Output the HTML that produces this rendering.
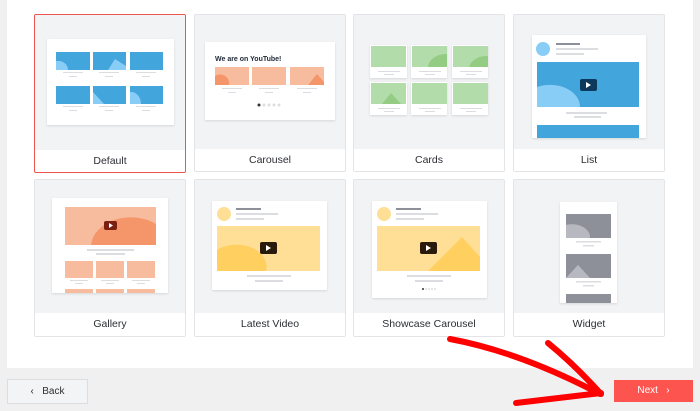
<!DOCTYPE html>
<html><head><meta charset="utf-8"><style>
*{margin:0;padding:0;box-sizing:border-box}
body{width:700px;height:411px;overflow:hidden;background:#f0f0f1;font-family:"Liberation Sans",sans-serif;position:relative}
.panel{position:absolute;left:7px;top:0;width:686px;height:368px;background:#fff}
.card{position:absolute;width:152px;border:1px solid #e3e4e7;border-radius:2px;background:#fff;overflow:hidden}
.card .pv{background:#f2f3f5;height:134px}
.card .lb{text-align:center;font-size:10.5px;color:#2b2e33;line-height:23px}
.r2 .pv{height:133px}
.btn{position:absolute;font-size:10px;text-align:center}
</style></head><body>
<div class="panel"></div>
<div class="card" style="left:34px;top:14px;height:159px;border-color:#f0544f"><div class="pv" style="height:135px"></div><div class="lb">Default</div></div>
<div class="card" style="left:194px;top:14px;height:158px"><div class="pv"></div><div class="lb">Carousel</div></div>
<div class="card" style="left:353px;top:14px;height:158px"><div class="pv"></div><div class="lb">Cards</div></div>
<div class="card" style="left:513px;top:14px;height:158px"><div class="pv"></div><div class="lb">List</div></div>
<div class="card r2" style="left:34px;top:179px;height:158px"><div class="pv"></div><div class="lb">Gallery</div></div>
<div class="card r2" style="left:194px;top:179px;height:158px"><div class="pv"></div><div class="lb">Latest Video</div></div>
<div class="card r2" style="left:353px;top:179px;height:158px"><div class="pv"></div><div class="lb">Showcase Carousel</div></div>
<div class="card r2" style="left:513px;top:179px;height:158px"><div class="pv"></div><div class="lb">Widget</div></div>
<div class="btn" style="left:7px;top:379px;width:81px;height:25px;border:1px solid #dcdde0;background:#f3f4f6;color:#2b2e33;line-height:23px">‹&nbsp;&nbsp;&nbsp;Back</div>
<div class="btn" style="left:614px;top:380px;width:79px;height:22px;background:#fe544f;color:#fff;line-height:22px">Next&nbsp;&nbsp;&nbsp;›</div>
<svg width="700" height="411" style="position:absolute;left:0;top:0" xmlns="http://www.w3.org/2000/svg">
<defs><filter id="s" x="-10%" y="-10%" width="120%" height="130%"><feDropShadow dx="0" dy="1" stdDeviation="1" flood-opacity="0.12"/></filter></defs>
<g fill="#fff" filter="url(#s)">
<rect x="47" y="39" width="127" height="86"/><rect x="205" y="42" width="130" height="78"/>
<rect x="532" y="35" width="114" height="103"/><rect x="52" y="198" width="116" height="95"/>
<rect x="212" y="201" width="115" height="89"/><rect x="372" y="201" width="115" height="97"/>
<rect x="560" y="202" width="57" height="101"/>
<rect x="370" y="45" width="37" height="33"/><rect x="411" y="45" width="36" height="33"/><rect x="452" y="45" width="36" height="33"/>
<rect x="370" y="82" width="37" height="33"/><rect x="411" y="82" width="36" height="33"/><rect x="452" y="82" width="36" height="33"/>
</g>
<!-- Default -->
<g fill="#42a5dc">
<rect x="56" y="52" width="34" height="18"/><rect x="93" y="52" width="33" height="18"/><rect x="130" y="52" width="33" height="18"/>
<rect x="56" y="86" width="34" height="18"/><rect x="93" y="86" width="33" height="18"/><rect x="130" y="86" width="33" height="18"/></g>
<g fill="#88cdf6">
<path d="M56 61a10 9 0 0 1 12 9h-12z"/><path d="M108 70l7-11 11 7v4z"/><path d="M93 92l11 12h-11z"/><path d="M130 92a10 12 0 0 1 11 12h-11z"/></g>
<g fill="#dcdde0"><rect x="63" y="72" width="20" height="1"/><rect x="99" y="72" width="20" height="1"/><rect x="136" y="72" width="20" height="1"/>
<rect x="69" y="76" width="8" height="1"/><rect x="105" y="76" width="8" height="1"/><rect x="142" y="76" width="8" height="1"/>
<rect x="63" y="106" width="20" height="1"/><rect x="99" y="106" width="20" height="1"/><rect x="136" y="106" width="20" height="1"/>
<rect x="69" y="110" width="8" height="1"/><rect x="105" y="110" width="8" height="1"/><rect x="142" y="110" width="8" height="1"/></g>
<!-- Carousel -->
<text x="215" y="61" font-size="7" font-weight="bold" fill="#1f2937" font-family="Liberation Sans">We are on YouTube!</text>
<g fill="#f7bb9d"><rect x="215" y="67" width="34" height="18"/><rect x="252" y="67" width="34" height="18"/><rect x="290" y="67" width="34" height="18"/></g>
<g fill="#f4966a"><path d="M215 76a9 9 0 0 1 14 9h-14z"/><path d="M308 85l9-11 7 8v3z"/></g>
<g fill="#dcdde0"><rect x="222" y="88" width="20" height="1"/><rect x="259" y="88" width="20" height="1"/><rect x="297" y="88" width="20" height="1"/>
<rect x="228" y="92" width="8" height="1"/><rect x="265" y="92" width="8" height="1"/><rect x="303" y="92" width="8" height="1"/>
<circle cx="264" cy="105" r="1.5"/><circle cx="269" cy="105" r="1.5"/><circle cx="274" cy="105" r="1.5"/><circle cx="279" cy="105" r="1.5"/></g>
<circle cx="259" cy="105" r="1.5" fill="#333"/>
<!-- Cards -->
<g fill="#b3dcab"><rect x="371" y="46" width="35" height="21"/><rect x="412" y="46" width="35" height="21"/><rect x="453" y="46" width="35" height="21"/>
<rect x="371" y="83" width="35" height="21"/><rect x="412" y="83" width="35" height="21"/><rect x="453" y="83" width="35" height="21"/></g>
<g fill="#94cc84"><path d="M428 67a18 14 0 0 1 19-13v13z"/><path d="M469 67a18 14 0 0 1 19-11v11z"/><path d="M382 104l9-11 10 11z"/></g>
<g fill="#dcdde0"><rect x="378" y="71" width="22" height="1"/><rect x="419" y="71" width="22" height="1"/><rect x="460" y="71" width="22" height="1"/>
<rect x="384" y="74" width="10" height="1"/><rect x="425" y="74" width="10" height="1"/><rect x="466" y="74" width="10" height="1"/>
<rect x="378" y="108" width="22" height="1"/><rect x="419" y="108" width="22" height="1"/><rect x="460" y="108" width="22" height="1"/>
<rect x="384" y="111" width="10" height="1"/><rect x="425" y="111" width="10" height="1"/><rect x="466" y="111" width="10" height="1"/></g>
<!-- List -->
<circle cx="543" cy="49" r="7" fill="#88cdf6"/>
<rect x="556" y="43" width="24" height="2" fill="#8e9099"/><rect x="556" y="48" width="42" height="2" fill="#dcdde0"/><rect x="556" y="53" width="28" height="2" fill="#dcdde0"/>
<rect x="537" y="62" width="102" height="45" fill="#42a5dc"/>
<path d="M537 87a30 22 0 0 1 43 20h-43z" fill="#88cdf6"/>
<rect x="580" y="79" width="17" height="12" rx="2" fill="#0d3a5c"/><path d="M586 82v6l5-3z" fill="#fff"/>
<rect x="566" y="112" width="41" height="2" fill="#dcdde0"/><rect x="574" y="116" width="27" height="2" fill="#dcdde0"/>
<rect x="537" y="125" width="102" height="13" fill="#42a5dc"/>
<!-- Gallery -->
<rect x="65" y="207" width="91" height="38" fill="#f7bb9d"/>
<path d="M91 245a40 30 0 0 1 65-21v21z" fill="#f4966a"/>
<rect x="104" y="221" width="13" height="9" rx="2" fill="#7a1f12"/><path d="M109 223v5l4-2.5z" fill="#fff"/>
<g fill="#dcdde0"><rect x="87" y="249" width="47" height="2"/><rect x="96" y="253" width="29" height="2"/>
<rect x="70" y="280" width="18" height="1"/><rect x="101" y="280" width="18" height="1"/><rect x="132" y="280" width="18" height="1"/>
<rect x="75" y="283" width="8" height="1"/><rect x="106" y="283" width="8" height="1"/><rect x="137" y="283" width="8" height="1"/></g>
<g fill="#f7bb9d"><rect x="65" y="261" width="28" height="17"/><rect x="96" y="261" width="28" height="17"/><rect x="127" y="261" width="28" height="17"/>
<rect x="65" y="289" width="28" height="4"/><rect x="96" y="289" width="28" height="4"/><rect x="127" y="289" width="28" height="4"/></g>
<!-- Latest video -->
<circle cx="224" cy="214" r="7" fill="#ffdf96"/>
<rect x="236" y="208" width="25" height="2" fill="#8e9099"/><rect x="236" y="213" width="42" height="2" fill="#dcdde0"/><rect x="236" y="218" width="28" height="2" fill="#dcdde0"/>
<rect x="217" y="226" width="103" height="45" fill="#ffdf96"/>
<path d="M217 250a30 22 0 0 1 49 21h-49z" fill="#ffcf5f"/>
<rect x="260" y="242" width="17" height="12" rx="2" fill="#2a1a0c"/><path d="M266 245v6l5-3z" fill="#fff"/>
<rect x="247" y="275" width="44" height="2" fill="#dcdde0"/><rect x="255" y="280" width="28" height="2" fill="#dcdde0"/>
<!-- Showcase -->
<circle cx="384" cy="214" r="7" fill="#ffdf96"/>
<rect x="396" y="208" width="25" height="2" fill="#8e9099"/><rect x="396" y="213" width="42" height="2" fill="#dcdde0"/><rect x="396" y="218" width="28" height="2" fill="#dcdde0"/>
<rect x="377" y="226" width="103" height="45" fill="#ffdf96"/>
<path d="M428 271l34-34 18 20v14z" fill="#ffcf5f"/>
<rect x="420" y="242" width="17" height="12" rx="2" fill="#2a1a0c"/><path d="M426 245v6l5-3z" fill="#fff"/>
<rect x="407" y="275" width="44" height="2" fill="#dcdde0"/><rect x="415" y="280" width="28" height="2" fill="#dcdde0"/>
<g fill="#dcdde0"><circle cx="426" cy="289" r="1"/><circle cx="429" cy="289" r="1"/><circle cx="432" cy="289" r="1"/><circle cx="435" cy="289" r="1"/></g><circle cx="423" cy="289" r="1" fill="#333"/>
<!-- Widget -->
<g fill="#8e9099"><rect x="566" y="214" width="45" height="24"/><rect x="566" y="254" width="45" height="24"/><rect x="566" y="294" width="45" height="9"/></g>
<g fill="#b8b9c0"><path d="M566 225a18 13 0 0 1 24 13h-24z"/><path d="M566 278l12-13 12 13z"/></g>
<g fill="#dcdde0"><rect x="576" y="241" width="25" height="1.5"/><rect x="583" y="245" width="11" height="1.5"/><rect x="576" y="281" width="25" height="1.5"/><rect x="583" y="285" width="11" height="1.5"/></g>
<!-- arrow -->
<g fill="none" stroke="#f00" stroke-width="6" stroke-linecap="round" stroke-linejoin="round">
<path d="M450 339Q520 352 600 394"/>
<path d="M548 343Q575 365 601 394"/>
<path d="M601 393Q560 398 516 403"/>
</g>
</svg>
</body></html>
